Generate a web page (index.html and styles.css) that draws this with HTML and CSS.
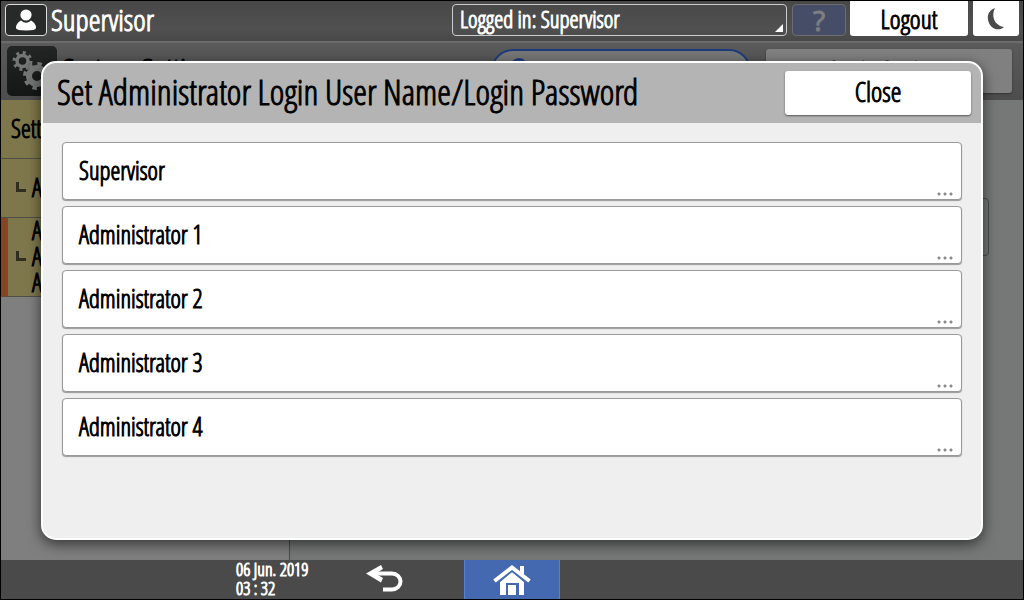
FILE: index.html
```html
<!DOCTYPE html>
<html lang="en">
<head>
<meta charset="utf-8">
<title>Set Administrator Login User Name/Login Password</title>
<link rel="stylesheet" href="styles.css">
</head>
<body>
<div class="screen">
  <header class="topbar">
    <span class="user-badge">
      <svg width="20" height="24" viewBox="0 0 20 24" aria-hidden="true"><circle cx="10" cy="7" r="5.6"/><path d="M5 12.500Q10 17 15 12.500Q20 15 20 20Q20 22.500 10 22.500Q0 22.500 0 20Q0 15 5 12.500Z"/></svg>
    </span>
    <span class="user-name">Supervisor</span>
    <button class="login-status" type="button">Logged in: Supervisor</button>
    <button class="help" type="button" disabled>?</button>
    <button class="logout" type="button">Logout</button>
    <button class="sleep" type="button" aria-label="Sleep">
      <svg width="18" height="24" viewBox="0 0 18 24" aria-hidden="true"><path d="M8 1C4 9 7 18 17 20C13 24 5 23 2 16C-1 9 2 3 8 1Z"/></svg>
    </button>
  </header>

  <section class="page-head">
    <span class="gears">
      <svg width="50" height="50" viewBox="0 0 50 50" aria-hidden="true">
        <g fill="none" stroke="#747575"><circle cx="15.500" cy="15" r="5.500" stroke-width="3.500"/><circle cx="15.500" cy="15" r="8.300" stroke-width="3.400" stroke-dasharray="2.900 3.620"/>
        <circle cx="30" cy="30" r="8" stroke-width="6"/><circle cx="30" cy="30" r="12" stroke-width="4" stroke-dasharray="4.400 5.020"/></g>
      </svg>
    </span>
    <h2 class="page-title">System Settings</h2>
    <div class="search"><i class="search-dot"></i></div>
    <button class="head-button" type="button">Login Settings</button>
  </section>

  <div class="content">
    <nav class="side">
      <a class="side-item" href="#">Settings</a>
      <a class="side-item child" href="#"><i class="branch"></i>A</a>
      <a class="side-item child current" href="#"><i class="branch"></i><span>A<br>A<br>A</span></a>
    </nav>
    <main class="main"><div class="setting"></div></main>
  </div>

  <footer class="footer">
    <time class="clock" datetime="2019-06-06T03:32">06 Jun. 2019<br>03 : 32</time>
    <button class="back" type="button" aria-label="Back">
      <svg width="38" height="30" viewBox="0 0 38 30" aria-hidden="true"><path d="M6 9.500H26A8.500 8 0 0 1 26 25.500H17" fill="none" stroke="#fff" stroke-width="4"/><path d="M0 9.500L15 1L17 5L9.500 9.500L17 14L15 18.500Z" fill="#fff"/></svg>
    </button>
    <button class="home" type="button" aria-label="Home">
      <svg width="40" height="32" viewBox="0 0 40 32" aria-hidden="true"><path d="M8 18L20 8L32 18V31H27V19H14V31H8Z" fill="#fff"/><path d="M16 21H24V31H16Z" fill="#fff"/><path d="M2.500 17.500L20 3.500L37.500 17.500" fill="none" stroke="#4469b1" stroke-width="7"/><path d="M28 2H32V14L28 11Z" fill="#fff"/><path d="M2.500 17L20 3.500L37.500 17" fill="none" stroke="#fff" stroke-width="4"/></svg>
    </button>
  </footer>

  <div class="dialog" role="dialog" aria-labelledby="dialog-title">
    <div class="dialog-head">
      <h1 class="dialog-title" id="dialog-title">Set Administrator Login User Name/Login Password</h1>
      <button class="close" type="button">Close</button>
    </div>
    <div class="options">
      <button class="option" type="button">Supervisor<i class="more"></i></button>
      <button class="option" type="button">Administrator 1<i class="more"></i></button>
      <button class="option" type="button">Administrator 2<i class="more"></i></button>
      <button class="option" type="button">Administrator 3<i class="more"></i></button>
      <button class="option" type="button">Administrator 4<i class="more"></i></button>
    </div>
  </div>
</div>
</body>
</html>
```
FILE: styles.css
```css
* { box-sizing: border-box; }
body { margin: 0; font-family: "Open Sans Condensed Light", "Liberation Sans Narrow", "Liberation Sans", sans-serif; color: #000; -webkit-text-stroke: 1px; }
button { font: inherit; color: inherit; margin: 0; padding: 0; border: 0; background: none; }
h1, h2 { margin: 0; font-weight: 400; }
svg { display: block; }

.screen { position: relative; display: flex; flex-direction: column; min-height: 100vh; border: 1px solid #000; overflow: hidden; }

.topbar { display: flex; align-items: flex-start; height: 40px; padding: 0 4px; background: linear-gradient(#484848, #505050 70%, #484848); color: #fff; }
.user-badge { display: flex; align-items: center; justify-content: center; width: 42px; height: 32px; margin-top: 3px; border: 1px solid #ddd; border-radius: 4px; background: #272a29; fill: #fff; }
.user-name { flex: 1; padding-left: 4px; font-size: 30px; line-height: 38px; }
.login-status { position: relative; width: 335px; height: 32px; margin-top: 3px; padding: 0 7px 2px; border: 1px solid #ccc; border-radius: 4px; font-size: 23px; line-height: 28px; text-align: left; }
.login-status::after { content: ""; position: absolute; right: 3px; bottom: 3px; border-left: 8px solid transparent; border-bottom: 8px solid #fff; }
.help { width: 54px; height: 32px; margin: 3px 4px 0 5px; border: 1px solid #6b6c70; border-radius: 4px; background: #454e66; color: #7c7e83; font-family: "Open Sans", sans-serif; font-size: 28px; line-height: 28px; }
.logout { width: 118px; height: 35px; margin-right: 5px; border-radius: 0 0 3px 3px; background: #fff; color: #000; font-size: 26px; line-height: 32px; }
.sleep { display: flex; align-items: center; justify-content: center; width: 46px; height: 35px; border-radius: 0 0 3px 3px; background: #fff; fill: #4a4a4a; }

.page-head { display: flex; align-items: flex-start; height: 59px; padding: 3px 11px 0 6px; border-top: 2px solid #6b6b6b; background: linear-gradient(#5a5a5a, #4d4d4d); }
.gears { border-radius: 5px; background: linear-gradient(#232625, #151616); overflow: hidden; }
.page-title { flex: 1; padding: 5px 0 0 5px; font-size: 32px; line-height: 36px; }
.search { width: 260px; height: 44px; margin: 3px 15px 0 0; padding: 7px 17px; border: 2px solid #1f3b7c; border-radius: 22px; background: #777; }
.search-dot { display: block; width: 18px; height: 18px; border-radius: 50%; background: #1f3b7c; }
.head-button { width: 246px; height: 44px; margin-top: 3px; padding-bottom: 2px; border-radius: 3px; background: #808080; box-shadow: 0 1px 2px #333; font-size: 26px; line-height: 32px; }

.content { flex: 1; display: flex; background: #767877; }
.side { width: 289px; border-right: 1px solid #4a4b4b; background: #7f7f7f; font-size: 25px; }
.side-item { display: flex; align-items: center; height: 59px; padding: 0 0 2px 10px; border-bottom: 1px solid #4f4f4a; background: #7e774c; color: #000; text-decoration: none; }
.child { gap: 6px; padding-left: 15px; }
.branch { width: 10px; height: 10px; border: solid #2f2d1e; border-width: 0 0 3px 3px; }
.current { height: 79px; padding-left: 8px; border-left: 7px solid #874622; line-height: 26px; }
.main { flex: 1; padding: 98px 34px 0 20px; }
.setting { height: 58px; border: 1px solid #4b4c4c; border-radius: 4px; }

.footer { display: flex; height: 39px; padding-left: 235px; background: #4a4a4b; color: #fff; }
.clock { width: 130px; font-size: 18px; line-height: 19px; }
.back { width: 98px; padding-top: 4px; display: flex; }
.home { display: flex; justify-content: center; width: 96px; padding-top: 4px; border: solid #5680d0; border-width: 0 1px; background: #4469b1; }

.dialog { position: absolute; top: 60px; right: 40px; bottom: 59px; left: 40px; border: 2px solid #fff; border-radius: 15px; background: #efefef; box-shadow: 0 4px 14px rgba(0, 0, 0, .6); overflow: hidden; }
.dialog-head { display: flex; align-items: center; justify-content: space-between; height: 60px; padding: 0 10px 0 14px; background: #b4b4b4; }
.dialog-title { padding-bottom: 2px; font-size: 35px; line-height: 40px; white-space: nowrap; }
.close { width: 186px; height: 44px; padding-bottom: 2px; border-radius: 3px; background: #fff; box-shadow: 0 1px 2px #555; font-size: 27px; line-height: 32px; }
.options { display: flex; flex-direction: column; gap: 6px; padding: 19px 19px 0; }
.option { position: relative; height: 58px; padding: 0 16px 2px; border: 1px solid #999; border-radius: 4px; background: #fff; box-shadow: 0 1px 1px #999; font-size: 25px; line-height: 32px; text-align: left; }
.more { position: absolute; right: 7px; bottom: 3px; width: 18px; height: 4px; background: radial-gradient(circle, #8b8b8b 1px, transparent 2px) 0 0 / 6px 4px; }
```
